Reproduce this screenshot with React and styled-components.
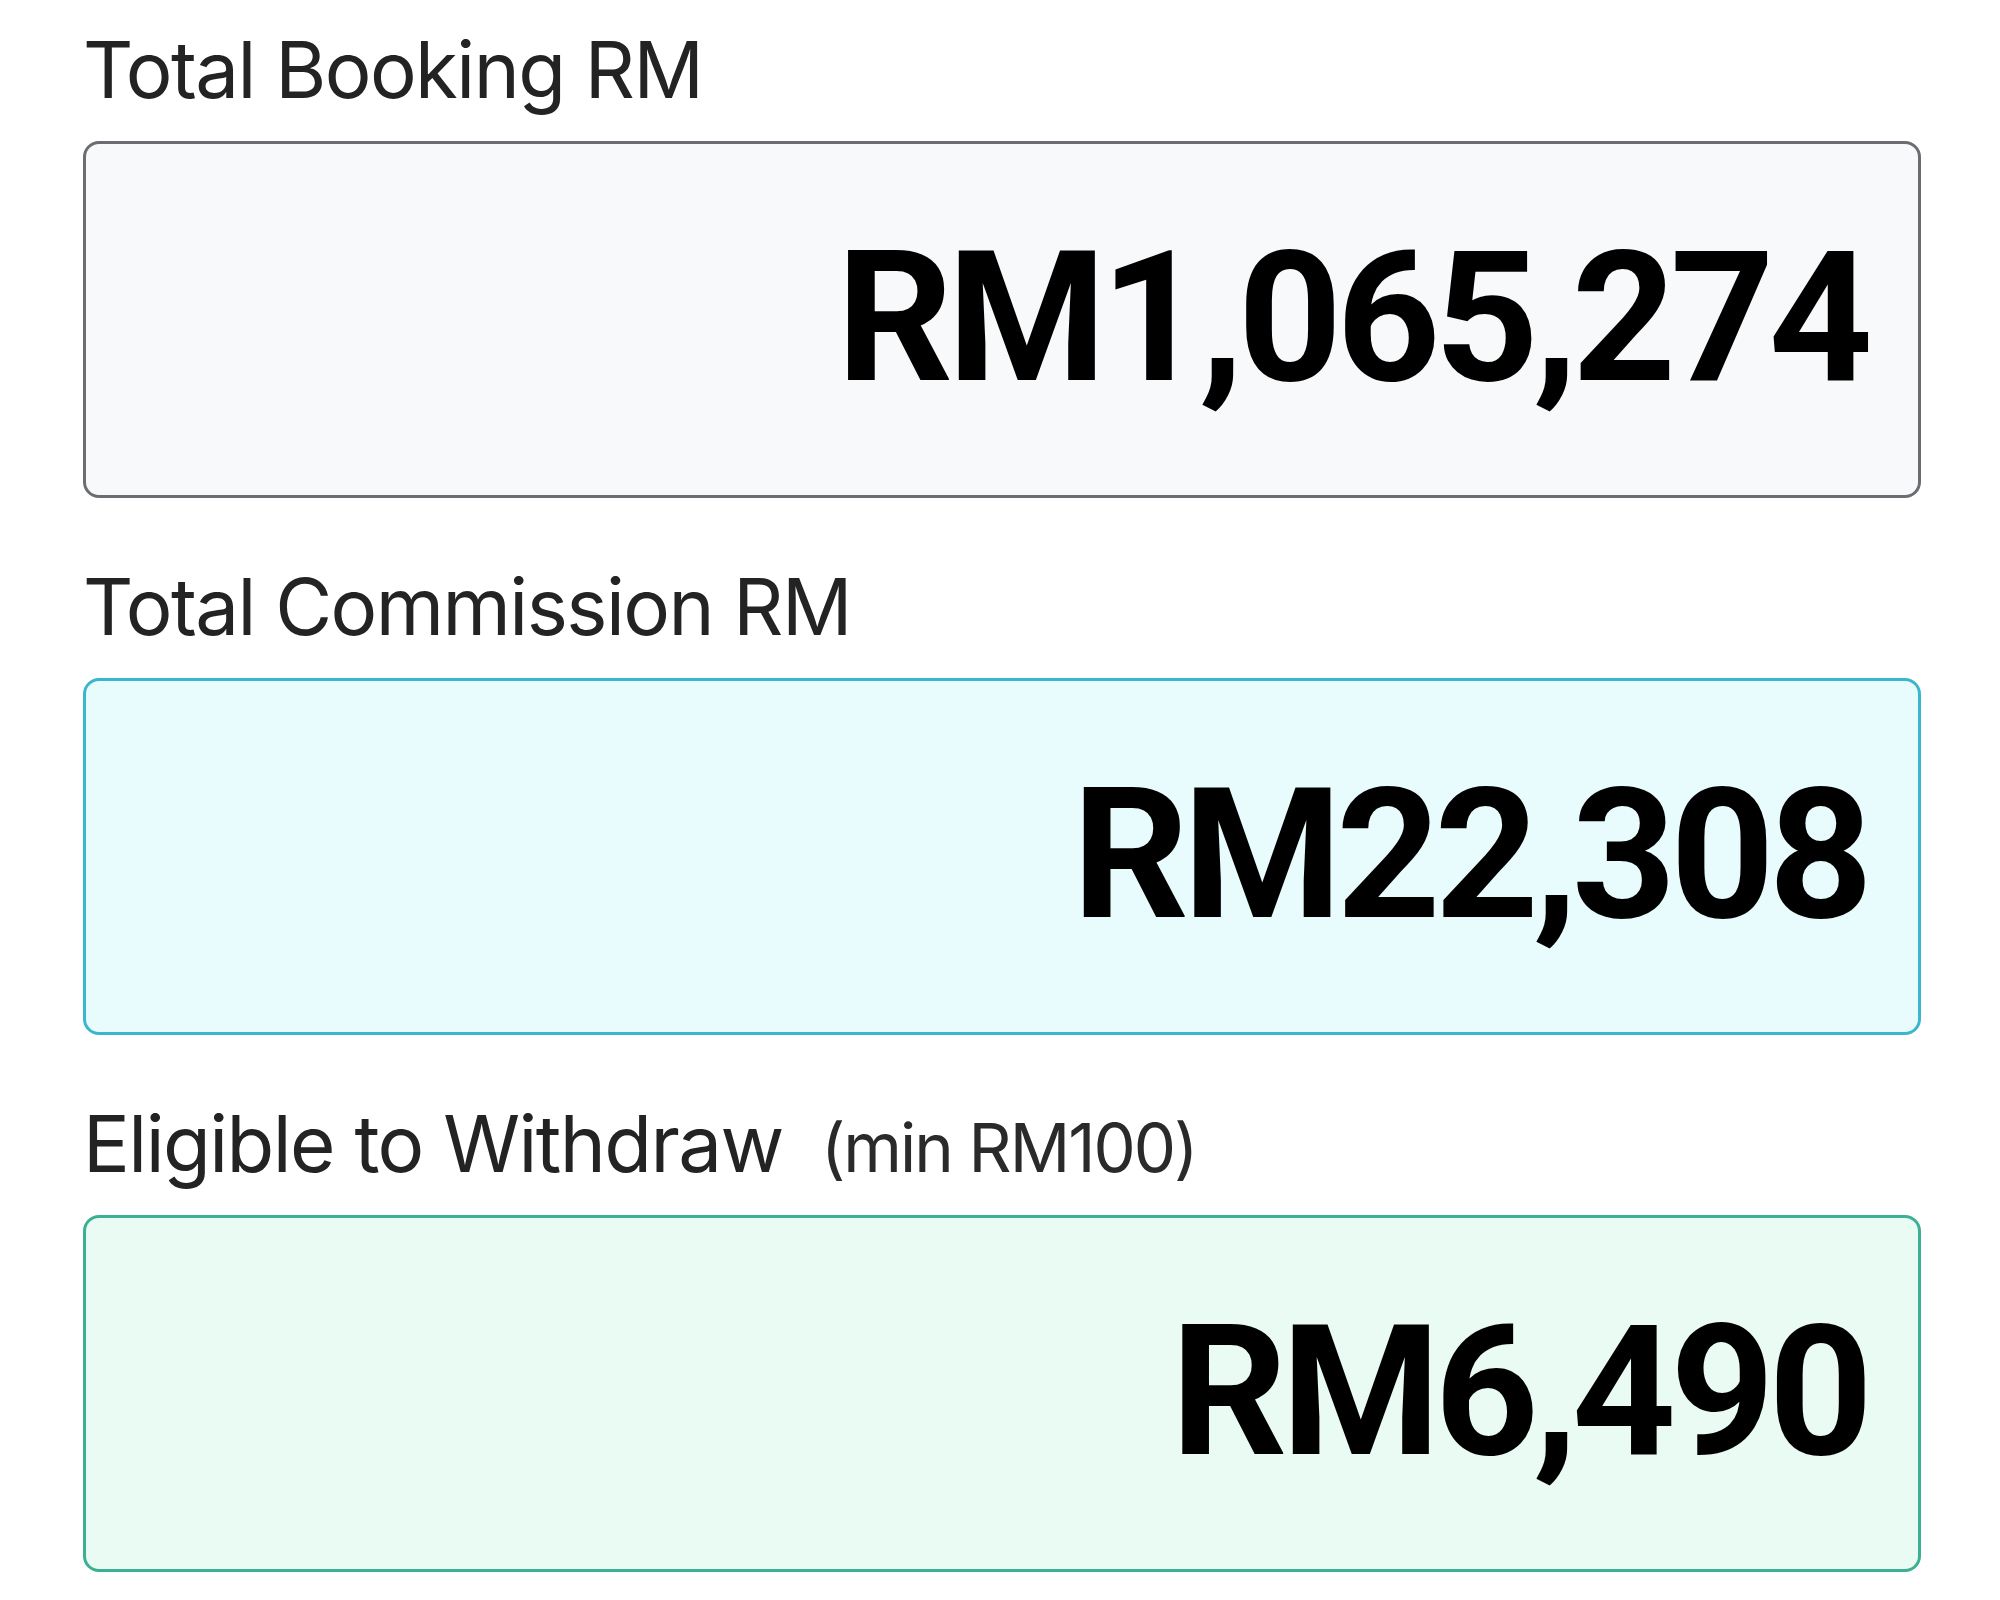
import React from 'react';
import styled, { createGlobalStyle } from 'styled-components';

const GlobalStyle = createGlobalStyle`
  html, body {
    margin: 0;
    padding: 0;
    background: #ffffff;
  }
`;

const tones = {
  neutral: { bg: '#f8f9fb', border: '#6c6c72' },
  cyan: { bg: '#e9fcfd', border: '#3cb6cc' },
  green: { bg: '#e9fbf2', border: '#3cb094' },
};

const Page = styled.div`
  display: flex;
  flex-direction: column;
  gap: 70px;
  width: 1838px;
  padding: 31px 0 0 83px;
`;

const Section = styled.section`
  display: flex;
  flex-direction: column;
  gap: 32px;
`;

const Label = styled.div`
  display: flex;
  align-items: baseline;
  gap: 38px;
  height: 78px;
  font-family: Inter, "Noto Sans", sans-serif;
  font-size: 78px;
  line-height: 78px;
  letter-spacing: -0.02em;
  color: #232323;
`;

const Hint = styled.span`
  font-size: 67px;
  line-height: 1;
  letter-spacing: -0.03em;
  color: #2a2a2a;
`;

const Box = styled.div`
  box-sizing: border-box;
  height: 357px;
  display: flex;
  align-items: center;
  justify-content: flex-end;
  padding-right: 51px;
  border: 3px solid ${(p) => tones[p.tone].border};
  border-radius: 16px;
  background: ${(p) => tones[p.tone].bg};
`;

const Amount = styled.div`
  font-family: Roboto, "Liberation Sans", Arial, sans-serif;
  font-weight: 700;
  font-size: 182px;
  line-height: 1;
  letter-spacing: -0.033em;
  color: #000000;
  margin-top: -4px;
`;

const stats = [
  { label: 'Total Booking RM', amount: 'RM1,065,274', tone: 'neutral' },
  { label: 'Total Commission RM', amount: 'RM22,308', tone: 'cyan' },
  { label: 'Eligible to Withdraw', hint: '(min RM100)', amount: 'RM6,490', tone: 'green' },
];

export default function App() {
  return (
    <>
      <GlobalStyle />
      <Page>
        {stats.map((s) => (
          <Section key={s.label}>
            <Label>
              {s.label}
              {s.hint && <Hint>{s.hint}</Hint>}
            </Label>
            <Box tone={s.tone}>
              <Amount>{s.amount}</Amount>
            </Box>
          </Section>
        ))}
      </Page>
    </>
  );
}
